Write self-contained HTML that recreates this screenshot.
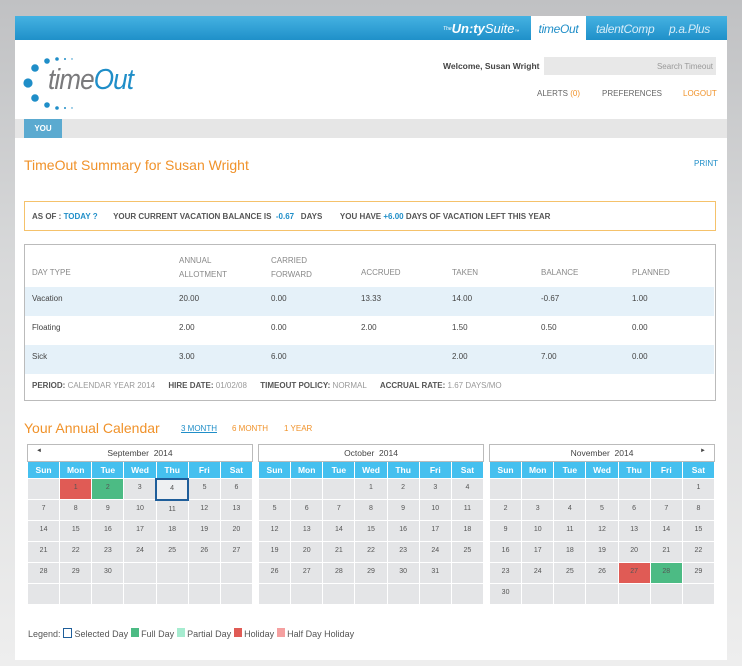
<!DOCTYPE html>
<html><head><meta charset="utf-8"><style>
*{margin:0;padding:0;box-sizing:border-box}
body{width:742px;height:666px;background:linear-gradient(#c0c1c3,#d8d9da 40%,#eeeeee);font-family:"Liberation Sans",sans-serif;position:relative;overflow:hidden}
.abs{position:absolute}
#panel{left:15px;top:16px;width:712px;height:644px;background:#fff}
#top{left:15px;top:16px;width:712px;height:24px;background:linear-gradient(#45b2e2,#1f90c9)}
.tab{top:16px;height:24px;font-style:italic;font-size:12px;color:#d6ecf8;line-height:26px;letter-spacing:-0.3px}
.sm{font-size:8px;color:#666}
.cal{position:absolute;top:444px;width:226px;border-collapse:collapse;table-layout:fixed;font-size:7px;color:#555}
.cal td{border:1px solid #fff;background:#e4e5e7;height:21px;text-align:center;vertical-align:top;padding-top:5px}
.cal tr.dh td{background:#45c0ef;color:#fff;font-weight:bold;font-size:8.5px;height:17px;padding-top:3px;border-top:0;vertical-align:middle;padding:0}
.cal tr.mh td{background:#fff;border:1px solid #bbb;height:17px;font-size:8.5px;color:#444;vertical-align:middle;padding:0;position:relative}
.h{background:#e05b55!important}.f{background:#4cbb84!important}.s{border:2px solid #1f5e9a!important;background:#eef0f2!important}
.th{position:absolute;font-size:8px;color:#888}
.row{position:absolute;left:25px;width:689px;height:29px}
.c{position:absolute;font-size:8px;color:#444}
</style></head><body>
<div id="panel" class="abs"></div>
<div id="top" class="abs"></div>
<div class="abs" style="left:443px;top:17px;font-size:13px;color:#fff;font-style:italic;line-height:24px"><span style="font-size:5px;vertical-align:top">The</span><b>Un:ty</b><span style="font-weight:normal">Suite</span><span style="font-size:5px">™</span></div>
<div class="abs tab" style="left:531px;width:55px;background:#fff;color:#1f8ec8;text-align:center">timeOut</div>
<div class="abs tab" style="left:596px">talentComp</div>
<div class="abs tab" style="left:669px">p.a.Plus</div>
<svg class="abs" style="left:0;top:0" width="80" height="120">
<g fill="#1f8ec8"><circle cx="47" cy="61" r="2.8"/><circle cx="57" cy="59" r="1.8"/><circle cx="65" cy="59" r="1"/><circle cx="72" cy="59" r=".7"/><circle cx="35" cy="68" r="3.8"/><circle cx="28" cy="83" r="4.6"/><circle cx="35" cy="98" r="3.8"/><circle cx="47" cy="105" r="2.8"/><circle cx="57" cy="108" r="1.8"/><circle cx="65" cy="108" r="1"/><circle cx="72" cy="108" r=".7"/></g></svg>
<div class="abs" style="left:48px;top:64px;font-size:29px;font-style:italic;color:#7a7a7c;letter-spacing:-1px;transform:scaleX(.9);transform-origin:left">time<span style="color:#1f8ec8">Out</span></div>
<div class="abs" style="left:443px;top:61px;font-size:8.5px;font-weight:bold;color:#444">Welcome, Susan Wright</div>
<div class="abs" style="left:544px;top:57px;width:172px;height:18px;background:#e8e8e8;font-size:8px;color:#999;text-align:right;padding:5px 3px 0 0">Search Timeout</div>
<div class="abs sm" style="left:537px;top:89px">ALERTS <span style="color:#f0922a">(0)</span></div>
<div class="abs sm" style="left:602px;top:89px">PREFERENCES</div>
<div class="abs sm" style="left:683px;top:89px;color:#f0922a">LOGOUT</div>
<div class="abs" style="left:15px;top:119px;width:712px;height:19px;background:#e6e6e6"></div>
<div class="abs" style="left:24px;top:119px;width:38px;height:19px;background:#5baad0;color:#fff;font-size:8px;font-weight:bold;text-align:center;line-height:19px">YOU</div>
<div class="abs" style="left:24px;top:157px;font-size:14px;color:#f0922a">TimeOut Summary for Susan Wright</div>
<div class="abs" style="left:694px;top:159px;font-size:8px;color:#1f8ec8">PRINT</div>
<div class="abs" style="left:24px;top:201px;width:692px;height:30px;border:1px solid #f5c26b;font-size:8px;font-weight:bold;color:#555;padding:10px 0 0 7px;white-space:pre">AS OF : <span style="color:#1f8ec8">TODAY ?</span>       YOUR CURRENT VACATION BALANCE IS  <span style="color:#1f8ec8">-0.67</span>   DAYS        YOU HAVE <span style="color:#1f8ec8">+6.00</span> DAYS OF VACATION LEFT THIS YEAR</div>
<div class="abs" style="left:24px;top:244px;width:692px;height:157px;border:1px solid #bbb"></div>
<div class="th" style="left:32px;top:268px">DAY TYPE</div>
<div class="th" style="left:179px;top:254px;line-height:14px">ANNUAL<br>ALLOTMENT</div>
<div class="th" style="left:271px;top:254px;line-height:14px">CARRIED<br>FORWARD</div>
<div class="th" style="left:361px;top:268px">ACCRUED</div>
<div class="th" style="left:452px;top:268px">TAKEN</div>
<div class="th" style="left:541px;top:268px">BALANCE</div>
<div class="th" style="left:632px;top:268px">PLANNED</div>
<div class="row" style="top:287px;background:#e5f1f9"></div>
<div class="row" style="top:345px;background:#e5f1f9"></div>
<div class="c" style="top:294px;left:32px">Vacation</div><div class="c" style="top:294px;left:179px">20.00</div><div class="c" style="top:294px;left:271px">0.00</div><div class="c" style="top:294px;left:361px">13.33</div><div class="c" style="top:294px;left:452px">14.00</div><div class="c" style="top:294px;left:541px">-0.67</div><div class="c" style="top:294px;left:632px">1.00</div>
<div class="c" style="top:323px;left:32px">Floating</div><div class="c" style="top:323px;left:179px">2.00</div><div class="c" style="top:323px;left:271px">0.00</div><div class="c" style="top:323px;left:361px">2.00</div><div class="c" style="top:323px;left:452px">1.50</div><div class="c" style="top:323px;left:541px">0.50</div><div class="c" style="top:323px;left:632px">0.00</div>
<div class="c" style="top:352px;left:32px">Sick</div><div class="c" style="top:352px;left:179px">3.00</div><div class="c" style="top:352px;left:271px">6.00</div><div class="c" style="top:352px;left:452px">2.00</div><div class="c" style="top:352px;left:541px">7.00</div><div class="c" style="top:352px;left:632px">0.00</div>
<div class="abs" style="left:32px;top:381px;font-size:8px;color:#999;white-space:pre"><b style="color:#555">PERIOD:</b> CALENDAR YEAR 2014      <b style="color:#555">HIRE DATE:</b> 01/02/08      <b style="color:#555">TIMEOUT POLICY:</b> NORMAL      <b style="color:#555">ACCRUAL RATE:</b> 1.67 DAYS/MO</div>
<div class="abs" style="left:24px;top:420px;font-size:14px;color:#f0922a">Your Annual Calendar</div>
<div class="abs" style="left:181px;top:424px;font-size:8px;color:#1f8ec8;text-decoration:underline">3 MONTH</div>
<div class="abs" style="left:232px;top:424px;font-size:8px;color:#f0922a">6 MONTH</div>
<div class="abs" style="left:284px;top:424px;font-size:8px;color:#f0922a">1 YEAR</div>

<table class="cal" style="left:27px">
<tr class="mh"><td colspan="7"><span style="position:absolute;left:8px;font-size:6px">◄</span>September &nbsp;2014</td></tr>
<tr class="dh"><td>Sun</td><td>Mon</td><td>Tue</td><td>Wed</td><td>Thu</td><td>Fri</td><td>Sat</td></tr>
<tr><td></td><td class="h">1</td><td class="f">2</td><td>3</td><td class="s">4</td><td>5</td><td>6</td></tr>
<tr><td>7</td><td>8</td><td>9</td><td>10</td><td>11</td><td>12</td><td>13</td></tr>
<tr><td>14</td><td>15</td><td>16</td><td>17</td><td>18</td><td>19</td><td>20</td></tr>
<tr><td>21</td><td>22</td><td>23</td><td>24</td><td>25</td><td>26</td><td>27</td></tr>
<tr><td>28</td><td>29</td><td>30</td><td></td><td></td><td></td><td></td></tr>
<tr><td></td><td></td><td></td><td></td><td></td><td></td><td></td></tr>
</table>
<table class="cal" style="left:258px">
<tr class="mh"><td colspan="7">October &nbsp;2014</td></tr>
<tr class="dh"><td>Sun</td><td>Mon</td><td>Tue</td><td>Wed</td><td>Thu</td><td>Fri</td><td>Sat</td></tr>
<tr><td></td><td></td><td></td><td>1</td><td>2</td><td>3</td><td>4</td></tr>
<tr><td>5</td><td>6</td><td>7</td><td>8</td><td>9</td><td>10</td><td>11</td></tr>
<tr><td>12</td><td>13</td><td>14</td><td>15</td><td>16</td><td>17</td><td>18</td></tr>
<tr><td>19</td><td>20</td><td>21</td><td>22</td><td>23</td><td>24</td><td>25</td></tr>
<tr><td>26</td><td>27</td><td>28</td><td>29</td><td>30</td><td>31</td><td></td></tr>
<tr><td></td><td></td><td></td><td></td><td></td><td></td><td></td></tr>
</table>
<table class="cal" style="left:489px">
<tr class="mh"><td colspan="7">November &nbsp;2014<span style="position:absolute;right:8px;font-size:6px">►</span></td></tr>
<tr class="dh"><td>Sun</td><td>Mon</td><td>Tue</td><td>Wed</td><td>Thu</td><td>Fri</td><td>Sat</td></tr>
<tr><td></td><td></td><td></td><td></td><td></td><td></td><td>1</td></tr>
<tr><td>2</td><td>3</td><td>4</td><td>5</td><td>6</td><td>7</td><td>8</td></tr>
<tr><td>9</td><td>10</td><td>11</td><td>12</td><td>13</td><td>14</td><td>15</td></tr>
<tr><td>16</td><td>17</td><td>18</td><td>19</td><td>20</td><td>21</td><td>22</td></tr>
<tr><td>23</td><td>24</td><td>25</td><td>26</td><td class="h">27</td><td class="f">28</td><td>29</td></tr>
<tr><td>30</td><td></td><td></td><td></td><td></td><td></td><td></td></tr>
</table>
<div class="abs" style="left:28px;top:628px;font-size:9px;color:#555;white-space:pre">Legend: <span style="display:inline-block;width:9px;height:10px;border:1.5px solid #1f5e9a;vertical-align:-1px"></span> Selected Day <span style="display:inline-block;width:8px;height:9px;background:#4cbb84"></span> Full Day <span style="display:inline-block;width:8px;height:9px;background:#a6ecd0"></span> Partial Day <span style="display:inline-block;width:8px;height:9px;background:#e05b55"></span> Holiday <span style="display:inline-block;width:8px;height:9px;background:#f5a0a0"></span> Half Day Holiday</div>
</body></html>
